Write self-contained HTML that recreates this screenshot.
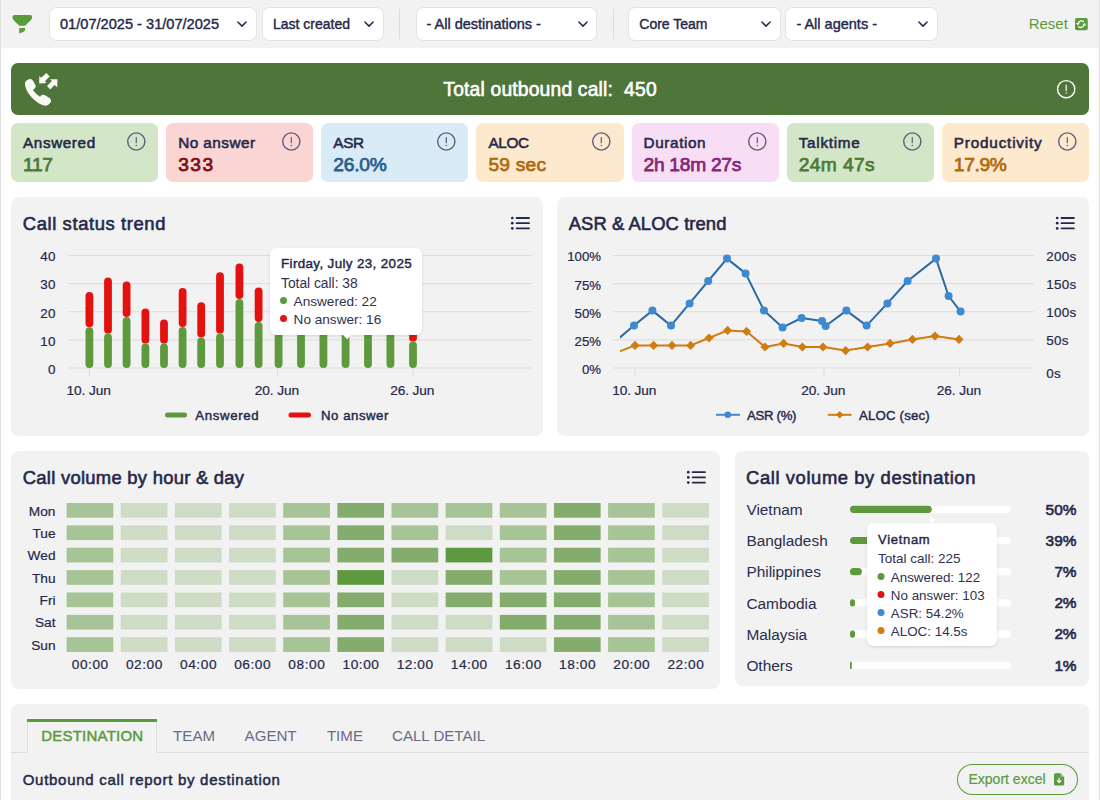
<!DOCTYPE html>
<html><head><meta charset="utf-8"><title>Outbound call dashboard</title>
<style>
html,body{margin:0;padding:0;background:#fff;width:1100px;height:800px;overflow:hidden;}
body{position:relative;font-family:'Liberation Sans', sans-serif;}
.t{position:absolute;white-space:nowrap;line-height:1;}
.b{position:absolute;}
.s{position:absolute;overflow:visible;}
</style></head><body>
<div class="b" style="left:0px;top:0px;width:1100px;height:48px;background:#f2f2f2;border-radius:0px;"></div>
<div class="b" style="left:0px;top:0px;width:1px;height:800px;background:#dedede;border-radius:0px;"></div>
<div class="b" style="left:1099px;top:0px;width:1px;height:800px;background:#dedede;border-radius:0px;"></div>
<svg class="s" style="left:10px;top:12px;" width="26" height="24" viewBox="10 12 26 24"><path d="M14.6 14.9 H30.2 Q32.2 14.9 32.1 17.2 Q32 18.6 31.1 19.7 L25.2 25.8 H19.2 L13.3 19.7 Q12.5 18.6 12.5 17.2 Q12.5 14.9 14.6 14.9 Z" fill="#5c9a3e"/><path d="M19.2 28 H25 V30.2 Q24.6 31.6 22 32.4 L19.2 33.3 Z" fill="#5c9a3e"/></svg>
<div class="b" style="left:49px;top:7.3px;width:207.5px;height:33.8px;background:#ffffff;border-radius:7px;box-shadow:0 0 0 1px #e3e3e3 inset;"></div>
<div class="t" style="left:60px;top:17.39px;font-size:14.6px;font-weight:400;color:#25284a;-webkit-text-stroke:0.4px #25284a;">01/07/2025 - 31/07/2025</div>
<svg class="s" style="left:236.0px;top:18px;" width="12" height="12" viewBox="236.0 18 12 12"><path d="M237.9 22.0 L242.0 26.1 L246.1 22.0" fill="none" stroke="#25284a" stroke-width="1.5" stroke-linecap="round" stroke-linejoin="round"/></svg>
<div class="b" style="left:262px;top:7.3px;width:121.5px;height:33.8px;background:#ffffff;border-radius:7px;box-shadow:0 0 0 1px #e3e3e3 inset;"></div>
<div class="t" style="left:273px;top:17.47px;font-size:14px;font-weight:400;color:#25284a;-webkit-text-stroke:0.4px #25284a;">Last created</div>
<svg class="s" style="left:363.0px;top:18px;" width="12" height="12" viewBox="363.0 18 12 12"><path d="M364.9 22.0 L369.0 26.1 L373.1 22.0" fill="none" stroke="#25284a" stroke-width="1.5" stroke-linecap="round" stroke-linejoin="round"/></svg>
<div class="b" style="left:399px;top:9px;width:1px;height:30px;background:#dcdcdc;border-radius:0px;"></div>
<div class="b" style="left:415.5px;top:7.3px;width:181.5px;height:33.8px;background:#ffffff;border-radius:7px;box-shadow:0 0 0 1px #e3e3e3 inset;"></div>
<div class="t" style="left:426.5px;top:17.41px;font-size:14.5px;font-weight:400;color:#25284a;-webkit-text-stroke:0.4px #25284a;">- All destinations -</div>
<svg class="s" style="left:576.5px;top:18px;" width="12" height="12" viewBox="576.5 18 12 12"><path d="M578.4 22.0 L582.5 26.1 L586.6 22.0" fill="none" stroke="#25284a" stroke-width="1.5" stroke-linecap="round" stroke-linejoin="round"/></svg>
<div class="b" style="left:612.5px;top:9px;width:1px;height:30px;background:#dcdcdc;border-radius:0px;"></div>
<div class="b" style="left:628.3px;top:7.3px;width:152.3px;height:33.8px;background:#ffffff;border-radius:7px;box-shadow:0 0 0 1px #e3e3e3 inset;"></div>
<div class="t" style="left:639.3px;top:17.47px;font-size:14px;font-weight:400;color:#25284a;-webkit-text-stroke:0.4px #25284a;">Core Team</div>
<svg class="s" style="left:760.0999999999999px;top:18px;" width="12" height="12" viewBox="760.0999999999999 18 12 12"><path d="M761.9999999999999 22.0 L766.0999999999999 26.1 L770.1999999999999 22.0" fill="none" stroke="#25284a" stroke-width="1.5" stroke-linecap="round" stroke-linejoin="round"/></svg>
<div class="b" style="left:785.4px;top:7.3px;width:152.2px;height:33.8px;background:#ffffff;border-radius:7px;box-shadow:0 0 0 1px #e3e3e3 inset;"></div>
<div class="t" style="left:796.4px;top:17.41px;font-size:14.5px;font-weight:400;color:#25284a;-webkit-text-stroke:0.4px #25284a;">- All agents -</div>
<svg class="s" style="left:917.0999999999999px;top:18px;" width="12" height="12" viewBox="917.0999999999999 18 12 12"><path d="M918.9999999999999 22.0 L923.0999999999999 26.1 L927.1999999999999 22.0" fill="none" stroke="#25284a" stroke-width="1.5" stroke-linecap="round" stroke-linejoin="round"/></svg>
<div class="t" style="left:1028.7px;top:16.24px;font-size:15px;font-weight:400;color:#5c9a3e;">Reset</div>
<svg class="s" style="left:1074px;top:17px;" width="15" height="15" viewBox="1074 17 15 15"><rect x="1075" y="17.9" width="12.8" height="12.4" rx="2" fill="#5c9a3e"/><path d="M1083.9 21.7 A3.5 3.5 0 0 0 1078.3 23.2" fill="none" stroke="#fff" stroke-width="1.3"/><path d="M1076 22.9 L1079.6 23.0 L1077.8 25.6 Z" fill="#fff"/><path d="M1078.2 26.6 A3.5 3.5 0 0 0 1083.8 25.1" fill="none" stroke="#fff" stroke-width="1.3"/><path d="M1086.2 25.4 L1082.6 25.3 L1084.4 22.7 Z" fill="#fff"/></svg>
<div class="b" style="left:11px;top:63px;width:1078px;height:52.3px;background:#50753a;border-radius:7px;"></div>
<svg class="s" style="left:20px;top:66px;" width="44" height="44" viewBox="20 66 44 44"><path d="M29.9 79.0 Q27.3 79.5 25.7 81.3 Q24.6 82.9 25.0 85.2 Q26.0 90.0 28.6 93.6 Q33.0 100.0 40.0 104.0 Q43.4 105.9 46.4 105.8 Q49.6 104.7 51.0 101.7 Q51.3 99.2 49.5 97.9 L44.6 95.1 Q42.5 94.2 41.1 95.5 L40.0 96.8 Q36.0 94.4 32.9 90.1 L34.7 88.6 Q36.1 87.2 35.6 85.5 L33.2 81.1 Q31.9 78.8 29.9 79.0 Z" fill="#f8f8f5"/><path d="M46.3 73 L49.7 76.4 L44.9 81.2 L46.6 82.9 L39.2 83.5 L39.3 76 L41.1 77.8 Z" fill="#f8f8f5"/><path d="M47 86 L50.3 89.4 L54.6 85.1 L57.3 87.2 L57.3 79.3 L49.9 79.3 L51.9 81.1 Z" fill="#f8f8f5"/></svg>
<div class="t" style="left:250.09000000000003px;width:600px;text-align:center;top:80.48px;font-size:19.3px;font-weight:400;color:#ffffff;letter-spacing:0.177px;-webkit-text-stroke:0.6px #ffffff;">Total outbound call:&nbsp; 450</div>
<svg class="s" style="left:1055px;top:78px;" width="22" height="22" viewBox="1055 78 22 22"><circle cx="1066.2" cy="89.2" r="8.6" fill="none" stroke="#ffffff" stroke-width="1.4"/><line x1="1066.2" y1="85.2" x2="1066.2" y2="90.4" stroke="#ffffff" stroke-width="1.2" stroke-linecap="round"/><circle cx="1066.2" cy="93.10000000000001" r="0.75" fill="#ffffff"/></svg>
<div class="b" style="left:11.0px;top:123px;width:147.14px;height:59px;background:#d3e7c8;border-radius:7px;"></div>
<div class="t" style="left:23.0px;top:134.60px;font-size:15.3px;font-weight:400;color:#25284a;letter-spacing:0.591px;-webkit-text-stroke:0.55px #25284a;">Answered</div>
<div class="t" style="left:23.0px;top:155.39px;font-size:19.2px;font-weight:400;color:#4c7a34;letter-spacing:-0.350px;-webkit-text-stroke:0.75px #4c7a34;">117</div>
<svg class="s" style="left:125.0px;top:131px;" width="22" height="22" viewBox="125.0 131 22 22"><circle cx="136.3" cy="141.5" r="8.6" fill="none" stroke="#5c5c7e" stroke-width="1.4"/><line x1="136.3" y1="137.5" x2="136.3" y2="142.7" stroke="#5c5c7e" stroke-width="1.2" stroke-linecap="round"/><circle cx="136.3" cy="145.4" r="0.75" fill="#5c5c7e"/></svg>
<div class="b" style="left:166.14px;top:123px;width:147.14px;height:59px;background:#fad5d3;border-radius:7px;"></div>
<div class="t" style="left:178.14px;top:134.60px;font-size:15.3px;font-weight:400;color:#25284a;letter-spacing:0.481px;-webkit-text-stroke:0.55px #25284a;">No answer</div>
<div class="t" style="left:178.14px;top:155.39px;font-size:19.2px;font-weight:400;color:#7d0f0f;letter-spacing:1.509px;-webkit-text-stroke:0.75px #7d0f0f;">333</div>
<svg class="s" style="left:280.14px;top:131px;" width="22" height="22" viewBox="280.14 131 22 22"><circle cx="291.44" cy="141.5" r="8.6" fill="none" stroke="#5c5c7e" stroke-width="1.4"/><line x1="291.44" y1="137.5" x2="291.44" y2="142.7" stroke="#5c5c7e" stroke-width="1.2" stroke-linecap="round"/><circle cx="291.44" cy="145.4" r="0.75" fill="#5c5c7e"/></svg>
<div class="b" style="left:321.29px;top:123px;width:147.14px;height:59px;background:#d9ebf6;border-radius:7px;"></div>
<div class="t" style="left:333.29px;top:134.60px;font-size:15.3px;font-weight:400;color:#25284a;letter-spacing:-0.350px;-webkit-text-stroke:0.55px #25284a;">ASR</div>
<div class="t" style="left:333.29px;top:155.39px;font-size:19.2px;font-weight:400;color:#285c8f;letter-spacing:-0.237px;-webkit-text-stroke:0.75px #285c8f;">26.0%</div>
<svg class="s" style="left:435.29px;top:131px;" width="22" height="22" viewBox="435.29 131 22 22"><circle cx="446.59" cy="141.5" r="8.6" fill="none" stroke="#5c5c7e" stroke-width="1.4"/><line x1="446.59" y1="137.5" x2="446.59" y2="142.7" stroke="#5c5c7e" stroke-width="1.2" stroke-linecap="round"/><circle cx="446.59" cy="145.4" r="0.75" fill="#5c5c7e"/></svg>
<div class="b" style="left:476.43px;top:123px;width:147.14px;height:59px;background:#fde9ce;border-radius:7px;"></div>
<div class="t" style="left:488.43px;top:134.60px;font-size:15.3px;font-weight:400;color:#25284a;letter-spacing:-0.350px;-webkit-text-stroke:0.55px #25284a;">ALOC</div>
<div class="t" style="left:488.43px;top:155.39px;font-size:19.2px;font-weight:400;color:#b06a0c;letter-spacing:0.231px;-webkit-text-stroke:0.75px #b06a0c;">59 sec</div>
<svg class="s" style="left:590.43px;top:131px;" width="22" height="22" viewBox="590.43 131 22 22"><circle cx="601.73" cy="141.5" r="8.6" fill="none" stroke="#5c5c7e" stroke-width="1.4"/><line x1="601.73" y1="137.5" x2="601.73" y2="142.7" stroke="#5c5c7e" stroke-width="1.2" stroke-linecap="round"/><circle cx="601.73" cy="145.4" r="0.75" fill="#5c5c7e"/></svg>
<div class="b" style="left:631.57px;top:123px;width:147.14px;height:59px;background:#f8def5;border-radius:7px;"></div>
<div class="t" style="left:643.57px;top:134.60px;font-size:15.3px;font-weight:400;color:#25284a;letter-spacing:0.605px;-webkit-text-stroke:0.55px #25284a;">Duration</div>
<div class="t" style="left:643.57px;top:155.39px;font-size:19.2px;font-weight:400;color:#872577;letter-spacing:-0.288px;-webkit-text-stroke:0.75px #872577;">2h 18m 27s</div>
<svg class="s" style="left:745.57px;top:131px;" width="22" height="22" viewBox="745.57 131 22 22"><circle cx="756.87" cy="141.5" r="8.6" fill="none" stroke="#5c5c7e" stroke-width="1.4"/><line x1="756.87" y1="137.5" x2="756.87" y2="142.7" stroke="#5c5c7e" stroke-width="1.2" stroke-linecap="round"/><circle cx="756.87" cy="145.4" r="0.75" fill="#5c5c7e"/></svg>
<div class="b" style="left:786.71px;top:123px;width:147.14px;height:59px;background:#d3e7c8;border-radius:7px;"></div>
<div class="t" style="left:798.71px;top:134.60px;font-size:15.3px;font-weight:400;color:#25284a;letter-spacing:0.710px;-webkit-text-stroke:0.55px #25284a;">Talktime</div>
<div class="t" style="left:798.71px;top:155.39px;font-size:19.2px;font-weight:400;color:#4c7a34;letter-spacing:0.392px;-webkit-text-stroke:0.75px #4c7a34;">24m 47s</div>
<svg class="s" style="left:900.71px;top:131px;" width="22" height="22" viewBox="900.71 131 22 22"><circle cx="912.01" cy="141.5" r="8.6" fill="none" stroke="#5c5c7e" stroke-width="1.4"/><line x1="912.01" y1="137.5" x2="912.01" y2="142.7" stroke="#5c5c7e" stroke-width="1.2" stroke-linecap="round"/><circle cx="912.01" cy="145.4" r="0.75" fill="#5c5c7e"/></svg>
<div class="b" style="left:941.86px;top:123px;width:147.14px;height:59px;background:#fde9ce;border-radius:7px;"></div>
<div class="t" style="left:953.86px;top:134.60px;font-size:15.3px;font-weight:400;color:#25284a;letter-spacing:0.798px;-webkit-text-stroke:0.55px #25284a;">Productivity</div>
<div class="t" style="left:953.86px;top:155.39px;font-size:19.2px;font-weight:400;color:#b06a0c;letter-spacing:-0.350px;-webkit-text-stroke:0.75px #b06a0c;">17.9%</div>
<svg class="s" style="left:1055.86px;top:131px;" width="22" height="22" viewBox="1055.86 131 22 22"><circle cx="1067.16" cy="141.5" r="8.6" fill="none" stroke="#5c5c7e" stroke-width="1.4"/><line x1="1067.16" y1="137.5" x2="1067.16" y2="142.7" stroke="#5c5c7e" stroke-width="1.2" stroke-linecap="round"/><circle cx="1067.16" cy="145.4" r="0.75" fill="#5c5c7e"/></svg>
<div class="b" style="left:11px;top:197px;width:531.6px;height:238.5px;background:#f2f2f2;border-radius:8px;"></div>
<div class="t" style="left:22.8px;top:214.90px;font-size:18.4px;font-weight:400;color:#25284a;letter-spacing:0.605px;-webkit-text-stroke:0.59px #25284a;">Call status trend</div>
<svg class="s" style="left:508px;top:213px;" width="26" height="20" viewBox="508 213 26 20"><circle cx="512.3" cy="218.0" r="1.35" fill="#25284a"/><line x1="516.5999999999999" y1="218.0" x2="529.0" y2="218.0" stroke="#25284a" stroke-width="1.8" stroke-linecap="round"/><circle cx="512.3" cy="223.2" r="1.35" fill="#25284a"/><line x1="516.5999999999999" y1="223.2" x2="529.0" y2="223.2" stroke="#25284a" stroke-width="1.8" stroke-linecap="round"/><circle cx="512.3" cy="228.4" r="1.35" fill="#25284a"/><line x1="516.5999999999999" y1="228.4" x2="529.0" y2="228.4" stroke="#25284a" stroke-width="1.8" stroke-linecap="round"/></svg>
<svg class="s" style="left:60px;top:240px;" width="480" height="140" viewBox="60 240 480 140"><line x1="68" y1="255.50" x2="532" y2="255.50" stroke="#dcdcdc" stroke-width="1"/><line x1="68" y1="283.62" x2="532" y2="283.62" stroke="#dcdcdc" stroke-width="1"/><line x1="68" y1="311.75" x2="532" y2="311.75" stroke="#dcdcdc" stroke-width="1"/><line x1="68" y1="339.88" x2="532" y2="339.88" stroke="#dcdcdc" stroke-width="1"/><line x1="68" y1="368.00" x2="532" y2="368.00" stroke="#dcdcdc" stroke-width="1"/><line x1="89.4" y1="368" x2="89.4" y2="376" stroke="#dcdcdc" stroke-width="1"/><line x1="277.6" y1="368" x2="277.6" y2="376" stroke="#dcdcdc" stroke-width="1"/><line x1="413" y1="368" x2="413" y2="376" stroke="#dcdcdc" stroke-width="1"/><rect x="85.50" y="292.00" width="7.8" height="35.20" rx="3.9" fill="#e3120f"/><rect x="85.50" y="327.20" width="7.8" height="40.80" rx="3.9" fill="#5e993e"/><rect x="104.10" y="277.60" width="7.8" height="56.00" rx="3.9" fill="#e3120f"/><rect x="104.10" y="333.60" width="7.8" height="34.40" rx="3.9" fill="#5e993e"/><rect x="122.70" y="281.60" width="7.8" height="35.40" rx="3.9" fill="#e3120f"/><rect x="122.70" y="317.00" width="7.8" height="51.00" rx="3.9" fill="#5e993e"/><rect x="141.50" y="308.60" width="7.8" height="35.00" rx="3.9" fill="#e3120f"/><rect x="141.50" y="343.60" width="7.8" height="24.40" rx="3.9" fill="#5e993e"/><rect x="160.10" y="319.60" width="7.8" height="24.00" rx="3.9" fill="#e3120f"/><rect x="160.10" y="343.60" width="7.8" height="24.40" rx="3.9" fill="#5e993e"/><rect x="178.70" y="288.00" width="7.8" height="39.00" rx="3.9" fill="#e3120f"/><rect x="178.70" y="327.00" width="7.8" height="41.00" rx="3.9" fill="#5e993e"/><rect x="197.30" y="302.20" width="7.8" height="35.20" rx="3.9" fill="#e3120f"/><rect x="197.30" y="337.40" width="7.8" height="30.60" rx="3.9" fill="#5e993e"/><rect x="216.10" y="272.20" width="7.8" height="61.40" rx="3.9" fill="#e3120f"/><rect x="216.10" y="333.60" width="7.8" height="34.40" rx="3.9" fill="#5e993e"/><rect x="235.50" y="263.60" width="7.8" height="35.40" rx="3.9" fill="#e3120f"/><rect x="235.50" y="299.00" width="7.8" height="69.00" rx="3.9" fill="#5e993e"/><rect x="254.70" y="287.40" width="7.8" height="34.60" rx="3.9" fill="#e3120f"/><rect x="254.70" y="322.00" width="7.8" height="46.00" rx="3.9" fill="#5e993e"/><rect x="274.70" y="322.00" width="7.8" height="10.00" rx="3.9" fill="#e3120f"/><rect x="274.70" y="332.00" width="7.8" height="36.00" rx="3.9" fill="#5e993e"/><rect x="297.10" y="322.00" width="7.8" height="10.00" rx="3.9" fill="#e3120f"/><rect x="297.10" y="332.00" width="7.8" height="36.00" rx="3.9" fill="#5e993e"/><rect x="319.50" y="322.00" width="7.8" height="10.00" rx="3.9" fill="#e3120f"/><rect x="319.50" y="332.00" width="7.8" height="36.00" rx="3.9" fill="#5e993e"/><rect x="341.70" y="322.00" width="7.8" height="10.00" rx="3.9" fill="#e3120f"/><rect x="341.70" y="332.00" width="7.8" height="36.00" rx="3.9" fill="#5e993e"/><rect x="364.10" y="322.00" width="7.8" height="10.00" rx="3.9" fill="#e3120f"/><rect x="364.10" y="332.00" width="7.8" height="36.00" rx="3.9" fill="#5e993e"/><rect x="386.50" y="322.00" width="7.8" height="10.00" rx="3.9" fill="#e3120f"/><rect x="386.50" y="332.00" width="7.8" height="36.00" rx="3.9" fill="#5e993e"/><rect x="409.10" y="328.00" width="7.8" height="13.60" rx="3.9" fill="#e3120f"/><rect x="409.10" y="341.60" width="7.8" height="26.40" rx="3.9" fill="#5e993e"/></svg>
<div class="t" style="right:1044.4px;top:250.35px;font-size:13.4px;font-weight:400;color:#25284a;-webkit-text-stroke:0.2px #25284a;letter-spacing:0.25px;">40</div>
<div class="t" style="right:1044.4px;top:278.48px;font-size:13.4px;font-weight:400;color:#25284a;-webkit-text-stroke:0.2px #25284a;letter-spacing:0.25px;">30</div>
<div class="t" style="right:1044.4px;top:306.60px;font-size:13.4px;font-weight:400;color:#25284a;-webkit-text-stroke:0.2px #25284a;letter-spacing:0.25px;">20</div>
<div class="t" style="right:1044.4px;top:334.73px;font-size:13.4px;font-weight:400;color:#25284a;-webkit-text-stroke:0.2px #25284a;letter-spacing:0.25px;">10</div>
<div class="t" style="right:1044.4px;top:362.85px;font-size:13.4px;font-weight:400;color:#25284a;-webkit-text-stroke:0.2px #25284a;letter-spacing:0.25px;">0</div>
<div class="t" style="left:-211.3px;width:600px;text-align:center;top:384.01px;font-size:13.7px;font-weight:400;color:#25284a;-webkit-text-stroke:0.2px #25284a;letter-spacing:-0.1px;">10. Jun</div>
<div class="t" style="left:-23.099999999999966px;width:600px;text-align:center;top:384.01px;font-size:13.7px;font-weight:400;color:#25284a;-webkit-text-stroke:0.2px #25284a;letter-spacing:-0.1px;">20. Jun</div>
<div class="t" style="left:112.30000000000001px;width:600px;text-align:center;top:384.01px;font-size:13.7px;font-weight:400;color:#25284a;-webkit-text-stroke:0.2px #25284a;letter-spacing:-0.1px;">26. Jun</div>
<svg class="s" style="left:160px;top:405px;" width="160" height="20" viewBox="160 405 160 20"><line x1="167.5" y1="415" x2="184.5" y2="415" stroke="#5e993e" stroke-width="5" stroke-linecap="round"/><line x1="291" y1="415" x2="308.5" y2="415" stroke="#e3120f" stroke-width="5" stroke-linecap="round"/></svg>
<div class="t" style="left:195.3px;top:408.58px;font-size:13.2px;font-weight:400;color:#25284a;letter-spacing:0.666px;-webkit-text-stroke:0.42px #25284a;">Answered</div>
<div class="t" style="left:321px;top:408.58px;font-size:13.2px;font-weight:400;color:#25284a;letter-spacing:0.538px;-webkit-text-stroke:0.42px #25284a;">No answer</div>
<div class="b" style="left:269.6px;top:247.6px;width:152.4px;height:87.1px;background:#ffffff;border-radius:6px;box-shadow:0 1px 3px rgba(0,0,0,0.12);"></div>
<svg class="s" style="left:340px;top:330px;" width="16" height="12" viewBox="340 330 16 12"><path d="M342.3 334.2 L347.2 339.2 L352.1 334.2 Z" fill="#fff"/></svg>
<div class="t" style="left:281px;top:257.25px;font-size:13.4px;font-weight:400;color:#25284a;letter-spacing:0.368px;-webkit-text-stroke:0.43px #25284a;">Firday, July 23, 2025</div>
<div class="t" style="left:281px;top:276.80px;font-size:13.8px;font-weight:400;color:#2e3150;">Total call: 38</div>
<svg class="s" style="left:278px;top:296px;" width="12" height="30" viewBox="278 296 12 30"><circle cx="283.5" cy="300.6" r="3.5" fill="#5e993e"/><circle cx="283.5" cy="318.5" r="3.5" fill="#e3120f"/></svg>
<div class="t" style="left:293.6px;top:294.83px;font-size:13.6px;font-weight:400;color:#2e3150;">Answered: 22</div>
<div class="t" style="left:293.6px;top:313.03px;font-size:13.6px;font-weight:400;color:#2e3150;">No answer: 16</div>
<div class="b" style="left:557px;top:197px;width:532px;height:238.5px;background:#f2f2f2;border-radius:8px;"></div>
<div class="t" style="left:568.7px;top:214.90px;font-size:18.4px;font-weight:400;color:#25284a;letter-spacing:0.088px;-webkit-text-stroke:0.59px #25284a;">ASR &amp; ALOC trend</div>
<svg class="s" style="left:1053px;top:213px;" width="26" height="20" viewBox="1053 213 26 20"><circle cx="1057.2" cy="218.0" r="1.35" fill="#25284a"/><line x1="1061.5" y1="218.0" x2="1073.9" y2="218.0" stroke="#25284a" stroke-width="1.8" stroke-linecap="round"/><circle cx="1057.2" cy="223.2" r="1.35" fill="#25284a"/><line x1="1061.5" y1="223.2" x2="1073.9" y2="223.2" stroke="#25284a" stroke-width="1.8" stroke-linecap="round"/><circle cx="1057.2" cy="228.4" r="1.35" fill="#25284a"/><line x1="1061.5" y1="228.4" x2="1073.9" y2="228.4" stroke="#25284a" stroke-width="1.8" stroke-linecap="round"/></svg>
<svg class="s" style="left:605px;top:240px;" width="440" height="140" viewBox="605 240 440 140"><line x1="613" y1="255.50" x2="1034" y2="255.50" stroke="#dcdcdc" stroke-width="1"/><line x1="613" y1="283.62" x2="1034" y2="283.62" stroke="#dcdcdc" stroke-width="1"/><line x1="613" y1="311.75" x2="1034" y2="311.75" stroke="#dcdcdc" stroke-width="1"/><line x1="613" y1="339.88" x2="1034" y2="339.88" stroke="#dcdcdc" stroke-width="1"/><line x1="613" y1="368.00" x2="1034" y2="368.00" stroke="#dcdcdc" stroke-width="1"/><line x1="635" y1="368" x2="635" y2="376" stroke="#dcdcdc" stroke-width="1"/><line x1="824" y1="368" x2="824" y2="376" stroke="#dcdcdc" stroke-width="1"/><line x1="959.6" y1="368" x2="959.6" y2="376" stroke="#dcdcdc" stroke-width="1"/><defs><clipPath id="pc"><rect x="620" y="240" width="420" height="140"/></clipPath></defs><polyline clip-path="url(#pc)" points="615.5,341.2 634,325.6 652.4,310.6 671,325.6 689.6,303.4 708.2,281 727,258.6 745.6,273.4 764,310.6 782.6,327.4 801.6,318 822,321 825.6,326 846.4,310.6 866.6,325.6 887.4,303.4 907.6,281 936,258.6 948.6,296 960.6,311.6" fill="none" stroke="#2b6aa3" stroke-width="2" stroke-linejoin="round"/><polyline clip-path="url(#pc)" points="615.5,353 635,345.4 653.6,345.4 672,345.4 690.6,345.4 709,338 727.6,330.4 746.6,331.4 765,347 783.6,343.4 802.4,347 823,347 845.6,350.6 867.6,347 890,343.4 912.4,339.4 935,336 959,339.4" fill="none" stroke="#d07c10" stroke-width="2" stroke-linejoin="round"/><circle cx="634" cy="325.6" r="4" fill="#3e8ad0"/><circle cx="652.4" cy="310.6" r="4" fill="#3e8ad0"/><circle cx="671" cy="325.6" r="4" fill="#3e8ad0"/><circle cx="689.6" cy="303.4" r="4" fill="#3e8ad0"/><circle cx="708.2" cy="281" r="4" fill="#3e8ad0"/><circle cx="727" cy="258.6" r="4" fill="#3e8ad0"/><circle cx="745.6" cy="273.4" r="4" fill="#3e8ad0"/><circle cx="764" cy="310.6" r="4" fill="#3e8ad0"/><circle cx="782.6" cy="327.4" r="4" fill="#3e8ad0"/><circle cx="801.6" cy="318" r="4" fill="#3e8ad0"/><circle cx="822" cy="321" r="4" fill="#3e8ad0"/><circle cx="825.6" cy="326" r="4" fill="#3e8ad0"/><circle cx="846.4" cy="310.6" r="4" fill="#3e8ad0"/><circle cx="866.6" cy="325.6" r="4" fill="#3e8ad0"/><circle cx="887.4" cy="303.4" r="4" fill="#3e8ad0"/><circle cx="907.6" cy="281" r="4" fill="#3e8ad0"/><circle cx="936" cy="258.6" r="4" fill="#3e8ad0"/><circle cx="948.6" cy="296" r="4" fill="#3e8ad0"/><circle cx="960.6" cy="311.6" r="4" fill="#3e8ad0"/><path d="M635 340.79999999999995 L639.6 345.4 L635 350.0 L630.4 345.4 Z" fill="#d07c10"/><path d="M653.6 340.79999999999995 L658.2 345.4 L653.6 350.0 L649.0 345.4 Z" fill="#d07c10"/><path d="M672 340.79999999999995 L676.6 345.4 L672 350.0 L667.4 345.4 Z" fill="#d07c10"/><path d="M690.6 340.79999999999995 L695.2 345.4 L690.6 350.0 L686.0 345.4 Z" fill="#d07c10"/><path d="M709 333.4 L713.6 338 L709 342.6 L704.4 338 Z" fill="#d07c10"/><path d="M727.6 325.79999999999995 L732.2 330.4 L727.6 335.0 L723.0 330.4 Z" fill="#d07c10"/><path d="M746.6 326.79999999999995 L751.2 331.4 L746.6 336.0 L742.0 331.4 Z" fill="#d07c10"/><path d="M765 342.4 L769.6 347 L765 351.6 L760.4 347 Z" fill="#d07c10"/><path d="M783.6 338.79999999999995 L788.2 343.4 L783.6 348.0 L779.0 343.4 Z" fill="#d07c10"/><path d="M802.4 342.4 L807.0 347 L802.4 351.6 L797.8 347 Z" fill="#d07c10"/><path d="M823 342.4 L827.6 347 L823 351.6 L818.4 347 Z" fill="#d07c10"/><path d="M845.6 346.0 L850.2 350.6 L845.6 355.20000000000005 L841.0 350.6 Z" fill="#d07c10"/><path d="M867.6 342.4 L872.2 347 L867.6 351.6 L863.0 347 Z" fill="#d07c10"/><path d="M890 338.79999999999995 L894.6 343.4 L890 348.0 L885.4 343.4 Z" fill="#d07c10"/><path d="M912.4 334.79999999999995 L917.0 339.4 L912.4 344.0 L907.8 339.4 Z" fill="#d07c10"/><path d="M935 331.4 L939.6 336 L935 340.6 L930.4 336 Z" fill="#d07c10"/><path d="M959 334.79999999999995 L963.6 339.4 L959 344.0 L954.4 339.4 Z" fill="#d07c10"/></svg>
<div class="t" style="right:499px;top:250.38px;font-size:13.2px;font-weight:400;color:#25284a;-webkit-text-stroke:0.2px #25284a;">100%</div>
<div class="t" style="right:499px;top:278.50px;font-size:13.2px;font-weight:400;color:#25284a;-webkit-text-stroke:0.2px #25284a;">75%</div>
<div class="t" style="right:499px;top:306.63px;font-size:13.2px;font-weight:400;color:#25284a;-webkit-text-stroke:0.2px #25284a;">50%</div>
<div class="t" style="right:499px;top:334.75px;font-size:13.2px;font-weight:400;color:#25284a;-webkit-text-stroke:0.2px #25284a;">25%</div>
<div class="t" style="right:499px;top:362.88px;font-size:13.2px;font-weight:400;color:#25284a;-webkit-text-stroke:0.2px #25284a;">0%</div>
<div class="t" style="left:1046.3px;top:249.85px;font-size:13.4px;font-weight:400;color:#25284a;-webkit-text-stroke:0.2px #25284a;letter-spacing:0.3px;">200s</div>
<div class="t" style="left:1046.3px;top:278.25px;font-size:13.4px;font-weight:400;color:#25284a;-webkit-text-stroke:0.2px #25284a;letter-spacing:0.3px;">150s</div>
<div class="t" style="left:1046.3px;top:306.15px;font-size:13.4px;font-weight:400;color:#25284a;-webkit-text-stroke:0.2px #25284a;letter-spacing:0.3px;">100s</div>
<div class="t" style="left:1046.3px;top:333.75px;font-size:13.4px;font-weight:400;color:#25284a;-webkit-text-stroke:0.2px #25284a;letter-spacing:0.3px;">50s</div>
<div class="t" style="left:1046.3px;top:367.35px;font-size:13.4px;font-weight:400;color:#25284a;-webkit-text-stroke:0.2px #25284a;letter-spacing:0.3px;">0s</div>
<div class="t" style="left:334.29999999999995px;width:600px;text-align:center;top:384.01px;font-size:13.7px;font-weight:400;color:#25284a;-webkit-text-stroke:0.2px #25284a;letter-spacing:-0.1px;">10. Jun</div>
<div class="t" style="left:523.3px;width:600px;text-align:center;top:384.01px;font-size:13.7px;font-weight:400;color:#25284a;-webkit-text-stroke:0.2px #25284a;letter-spacing:-0.1px;">20. Jun</div>
<div class="t" style="left:658.9px;width:600px;text-align:center;top:384.01px;font-size:13.7px;font-weight:400;color:#25284a;-webkit-text-stroke:0.2px #25284a;letter-spacing:-0.1px;">26. Jun</div>
<svg class="s" style="left:710px;top:405px;" width="150" height="20" viewBox="710 405 150 20"><line x1="716" y1="414.8" x2="740" y2="414.8" stroke="#3e8ad0" stroke-width="2"/><circle cx="727.8" cy="414.8" r="3.3" fill="#3e8ad0"/><line x1="827.8" y1="414.8" x2="851.6" y2="414.8" stroke="#d07c10" stroke-width="2"/><path d="M839.7 411 L843.5 414.8 L839.7 418.6 L835.9 414.8 Z" fill="#d07c10"/></svg>
<div class="t" style="left:747px;top:408.58px;font-size:13.2px;font-weight:400;color:#25284a;letter-spacing:-0.302px;-webkit-text-stroke:0.42px #25284a;">ASR (%)</div>
<div class="t" style="left:859px;top:408.58px;font-size:13.2px;font-weight:400;color:#25284a;letter-spacing:0.208px;-webkit-text-stroke:0.42px #25284a;">ALOC (sec)</div>
<div class="b" style="left:11px;top:451px;width:708.5px;height:238px;background:#f2f2f2;border-radius:8px;"></div>
<div class="t" style="left:22.8px;top:468.70px;font-size:18.4px;font-weight:400;color:#25284a;letter-spacing:0.275px;-webkit-text-stroke:0.59px #25284a;">Call volume by hour &amp; day</div>
<svg class="s" style="left:684px;top:467px;" width="26" height="20" viewBox="684 467 26 20"><circle cx="688.3" cy="472.2" r="1.35" fill="#25284a"/><line x1="692.5999999999999" y1="472.2" x2="705.0" y2="472.2" stroke="#25284a" stroke-width="1.8" stroke-linecap="round"/><circle cx="688.3" cy="477.4" r="1.35" fill="#25284a"/><line x1="692.5999999999999" y1="477.4" x2="705.0" y2="477.4" stroke="#25284a" stroke-width="1.8" stroke-linecap="round"/><circle cx="688.3" cy="482.59999999999997" r="1.35" fill="#25284a"/><line x1="692.5999999999999" y1="482.59999999999997" x2="705.0" y2="482.59999999999997" stroke="#25284a" stroke-width="1.8" stroke-linecap="round"/></svg>
<svg class="s" style="left:60px;top:495px;" width="660" height="165" viewBox="60 495 660 165"><rect x="66.60" y="503.00" width="46.7" height="14.7" fill="#a6c496"/><rect x="120.75" y="503.00" width="46.7" height="14.7" fill="#cedbc5"/><rect x="174.90" y="503.00" width="46.7" height="14.7" fill="#cedbc5"/><rect x="229.05" y="503.00" width="46.7" height="14.7" fill="#cedbc5"/><rect x="283.20" y="503.00" width="46.7" height="14.7" fill="#a6c496"/><rect x="337.35" y="503.00" width="46.7" height="14.7" fill="#84ad6d"/><rect x="391.50" y="503.00" width="46.7" height="14.7" fill="#a6c496"/><rect x="445.65" y="503.00" width="46.7" height="14.7" fill="#a6c496"/><rect x="499.80" y="503.00" width="46.7" height="14.7" fill="#a6c496"/><rect x="553.95" y="503.00" width="46.7" height="14.7" fill="#84ad6d"/><rect x="608.10" y="503.00" width="46.7" height="14.7" fill="#a6c496"/><rect x="662.25" y="503.00" width="46.7" height="14.7" fill="#cedbc5"/><rect x="66.60" y="525.37" width="46.7" height="14.7" fill="#a6c496"/><rect x="120.75" y="525.37" width="46.7" height="14.7" fill="#cedbc5"/><rect x="174.90" y="525.37" width="46.7" height="14.7" fill="#cedbc5"/><rect x="229.05" y="525.37" width="46.7" height="14.7" fill="#cedbc5"/><rect x="283.20" y="525.37" width="46.7" height="14.7" fill="#a6c496"/><rect x="337.35" y="525.37" width="46.7" height="14.7" fill="#84ad6d"/><rect x="391.50" y="525.37" width="46.7" height="14.7" fill="#a6c496"/><rect x="445.65" y="525.37" width="46.7" height="14.7" fill="#cedbc5"/><rect x="499.80" y="525.37" width="46.7" height="14.7" fill="#a6c496"/><rect x="553.95" y="525.37" width="46.7" height="14.7" fill="#84ad6d"/><rect x="608.10" y="525.37" width="46.7" height="14.7" fill="#a6c496"/><rect x="662.25" y="525.37" width="46.7" height="14.7" fill="#cedbc5"/><rect x="66.60" y="547.74" width="46.7" height="14.7" fill="#a6c496"/><rect x="120.75" y="547.74" width="46.7" height="14.7" fill="#cedbc5"/><rect x="174.90" y="547.74" width="46.7" height="14.7" fill="#cedbc5"/><rect x="229.05" y="547.74" width="46.7" height="14.7" fill="#cedbc5"/><rect x="283.20" y="547.74" width="46.7" height="14.7" fill="#a6c496"/><rect x="337.35" y="547.74" width="46.7" height="14.7" fill="#84ad6d"/><rect x="391.50" y="547.74" width="46.7" height="14.7" fill="#84ad6d"/><rect x="445.65" y="547.74" width="46.7" height="14.7" fill="#5e993f"/><rect x="499.80" y="547.74" width="46.7" height="14.7" fill="#a6c496"/><rect x="553.95" y="547.74" width="46.7" height="14.7" fill="#84ad6d"/><rect x="608.10" y="547.74" width="46.7" height="14.7" fill="#a6c496"/><rect x="662.25" y="547.74" width="46.7" height="14.7" fill="#cedbc5"/><rect x="66.60" y="570.11" width="46.7" height="14.7" fill="#a6c496"/><rect x="120.75" y="570.11" width="46.7" height="14.7" fill="#cedbc5"/><rect x="174.90" y="570.11" width="46.7" height="14.7" fill="#cedbc5"/><rect x="229.05" y="570.11" width="46.7" height="14.7" fill="#cedbc5"/><rect x="283.20" y="570.11" width="46.7" height="14.7" fill="#a6c496"/><rect x="337.35" y="570.11" width="46.7" height="14.7" fill="#5e993f"/><rect x="391.50" y="570.11" width="46.7" height="14.7" fill="#cedbc5"/><rect x="445.65" y="570.11" width="46.7" height="14.7" fill="#84ad6d"/><rect x="499.80" y="570.11" width="46.7" height="14.7" fill="#a6c496"/><rect x="553.95" y="570.11" width="46.7" height="14.7" fill="#84ad6d"/><rect x="608.10" y="570.11" width="46.7" height="14.7" fill="#a6c496"/><rect x="662.25" y="570.11" width="46.7" height="14.7" fill="#cedbc5"/><rect x="66.60" y="592.48" width="46.7" height="14.7" fill="#a6c496"/><rect x="120.75" y="592.48" width="46.7" height="14.7" fill="#cedbc5"/><rect x="174.90" y="592.48" width="46.7" height="14.7" fill="#cedbc5"/><rect x="229.05" y="592.48" width="46.7" height="14.7" fill="#cedbc5"/><rect x="283.20" y="592.48" width="46.7" height="14.7" fill="#a6c496"/><rect x="337.35" y="592.48" width="46.7" height="14.7" fill="#84ad6d"/><rect x="391.50" y="592.48" width="46.7" height="14.7" fill="#cedbc5"/><rect x="445.65" y="592.48" width="46.7" height="14.7" fill="#84ad6d"/><rect x="499.80" y="592.48" width="46.7" height="14.7" fill="#84ad6d"/><rect x="553.95" y="592.48" width="46.7" height="14.7" fill="#84ad6d"/><rect x="608.10" y="592.48" width="46.7" height="14.7" fill="#a6c496"/><rect x="662.25" y="592.48" width="46.7" height="14.7" fill="#cedbc5"/><rect x="66.60" y="614.85" width="46.7" height="14.7" fill="#a6c496"/><rect x="120.75" y="614.85" width="46.7" height="14.7" fill="#cedbc5"/><rect x="174.90" y="614.85" width="46.7" height="14.7" fill="#cedbc5"/><rect x="229.05" y="614.85" width="46.7" height="14.7" fill="#cedbc5"/><rect x="283.20" y="614.85" width="46.7" height="14.7" fill="#a6c496"/><rect x="337.35" y="614.85" width="46.7" height="14.7" fill="#84ad6d"/><rect x="391.50" y="614.85" width="46.7" height="14.7" fill="#cedbc5"/><rect x="445.65" y="614.85" width="46.7" height="14.7" fill="#cedbc5"/><rect x="499.80" y="614.85" width="46.7" height="14.7" fill="#84ad6d"/><rect x="553.95" y="614.85" width="46.7" height="14.7" fill="#84ad6d"/><rect x="608.10" y="614.85" width="46.7" height="14.7" fill="#a6c496"/><rect x="662.25" y="614.85" width="46.7" height="14.7" fill="#cedbc5"/><rect x="66.60" y="637.22" width="46.7" height="14.7" fill="#a6c496"/><rect x="120.75" y="637.22" width="46.7" height="14.7" fill="#cedbc5"/><rect x="174.90" y="637.22" width="46.7" height="14.7" fill="#cedbc5"/><rect x="229.05" y="637.22" width="46.7" height="14.7" fill="#cedbc5"/><rect x="283.20" y="637.22" width="46.7" height="14.7" fill="#a6c496"/><rect x="337.35" y="637.22" width="46.7" height="14.7" fill="#84ad6d"/><rect x="391.50" y="637.22" width="46.7" height="14.7" fill="#cedbc5"/><rect x="445.65" y="637.22" width="46.7" height="14.7" fill="#cedbc5"/><rect x="499.80" y="637.22" width="46.7" height="14.7" fill="#cedbc5"/><rect x="553.95" y="637.22" width="46.7" height="14.7" fill="#84ad6d"/><rect x="608.10" y="637.22" width="46.7" height="14.7" fill="#a6c496"/><rect x="662.25" y="637.22" width="46.7" height="14.7" fill="#cedbc5"/></svg>
<div class="t" style="right:1044.5px;top:504.61px;font-size:13.7px;font-weight:400;color:#25284a;-webkit-text-stroke:0.2px #25284a;">Mon</div>
<div class="t" style="right:1044.5px;top:526.98px;font-size:13.7px;font-weight:400;color:#25284a;-webkit-text-stroke:0.2px #25284a;">Tue</div>
<div class="t" style="right:1044.5px;top:549.35px;font-size:13.7px;font-weight:400;color:#25284a;-webkit-text-stroke:0.2px #25284a;">Wed</div>
<div class="t" style="right:1044.5px;top:571.72px;font-size:13.7px;font-weight:400;color:#25284a;-webkit-text-stroke:0.2px #25284a;">Thu</div>
<div class="t" style="right:1044.5px;top:594.09px;font-size:13.7px;font-weight:400;color:#25284a;-webkit-text-stroke:0.2px #25284a;">Fri</div>
<div class="t" style="right:1044.5px;top:616.46px;font-size:13.7px;font-weight:400;color:#25284a;-webkit-text-stroke:0.2px #25284a;">Sat</div>
<div class="t" style="right:1044.5px;top:638.83px;font-size:13.7px;font-weight:400;color:#25284a;-webkit-text-stroke:0.2px #25284a;">Sun</div>
<div class="t" style="left:-209.75px;width:600px;text-align:center;top:658.01px;font-size:13.7px;font-weight:400;color:#25284a;-webkit-text-stroke:0.2px #25284a;letter-spacing:0.55px;">00:00</div>
<div class="t" style="left:-155.6px;width:600px;text-align:center;top:658.01px;font-size:13.7px;font-weight:400;color:#25284a;-webkit-text-stroke:0.2px #25284a;letter-spacing:0.55px;">02:00</div>
<div class="t" style="left:-101.45000000000002px;width:600px;text-align:center;top:658.01px;font-size:13.7px;font-weight:400;color:#25284a;-webkit-text-stroke:0.2px #25284a;letter-spacing:0.55px;">04:00</div>
<div class="t" style="left:-47.30000000000001px;width:600px;text-align:center;top:658.01px;font-size:13.7px;font-weight:400;color:#25284a;-webkit-text-stroke:0.2px #25284a;letter-spacing:0.55px;">06:00</div>
<div class="t" style="left:6.850000000000023px;width:600px;text-align:center;top:658.01px;font-size:13.7px;font-weight:400;color:#25284a;-webkit-text-stroke:0.2px #25284a;letter-spacing:0.55px;">08:00</div>
<div class="t" style="left:61.00000000000006px;width:600px;text-align:center;top:658.01px;font-size:13.7px;font-weight:400;color:#25284a;-webkit-text-stroke:0.2px #25284a;letter-spacing:0.55px;">10:00</div>
<div class="t" style="left:115.15000000000003px;width:600px;text-align:center;top:658.01px;font-size:13.7px;font-weight:400;color:#25284a;-webkit-text-stroke:0.2px #25284a;letter-spacing:0.55px;">12:00</div>
<div class="t" style="left:169.3px;width:600px;text-align:center;top:658.01px;font-size:13.7px;font-weight:400;color:#25284a;-webkit-text-stroke:0.2px #25284a;letter-spacing:0.55px;">14:00</div>
<div class="t" style="left:223.44999999999993px;width:600px;text-align:center;top:658.01px;font-size:13.7px;font-weight:400;color:#25284a;-webkit-text-stroke:0.2px #25284a;letter-spacing:0.55px;">16:00</div>
<div class="t" style="left:277.5999999999999px;width:600px;text-align:center;top:658.01px;font-size:13.7px;font-weight:400;color:#25284a;-webkit-text-stroke:0.2px #25284a;letter-spacing:0.55px;">18:00</div>
<div class="t" style="left:331.75px;width:600px;text-align:center;top:658.01px;font-size:13.7px;font-weight:400;color:#25284a;-webkit-text-stroke:0.2px #25284a;letter-spacing:0.55px;">20:00</div>
<div class="t" style="left:385.9px;width:600px;text-align:center;top:658.01px;font-size:13.7px;font-weight:400;color:#25284a;-webkit-text-stroke:0.2px #25284a;letter-spacing:0.55px;">22:00</div>
<div class="b" style="left:735px;top:451px;width:354px;height:235px;background:#f2f2f2;border-radius:8px;"></div>
<div class="t" style="left:746.1px;top:468.70px;font-size:18.4px;font-weight:400;color:#25284a;letter-spacing:0.584px;-webkit-text-stroke:0.59px #25284a;">Call volume by destination</div>
<svg class="s" style="left:840px;top:495px;" width="180" height="180" viewBox="840 495 180 180"><rect x="850" y="505.70" width="161" height="7.2" rx="3.6" fill="#ffffff"/><rect x="850" y="505.70" width="81.8" height="7.2" rx="3.6" fill="#5e993e"/><rect x="850" y="536.90" width="161" height="7.2" rx="3.6" fill="#ffffff"/><rect x="850" y="536.90" width="62.7" height="7.2" rx="3.6" fill="#5e993e"/><rect x="850" y="568.10" width="161" height="7.2" rx="3.6" fill="#ffffff"/><rect x="850" y="568.10" width="11.9" height="7.2" rx="3.6" fill="#5e993e"/><rect x="850" y="599.30" width="161" height="7.2" rx="3.6" fill="#ffffff"/><rect x="850" y="599.30" width="5" height="7.2" rx="2.5" fill="#5e993e"/><rect x="850" y="630.50" width="161" height="7.2" rx="3.6" fill="#ffffff"/><rect x="850" y="630.50" width="5" height="7.2" rx="2.5" fill="#5e993e"/><rect x="850" y="661.70" width="161" height="7.2" rx="3.6" fill="#ffffff"/><rect x="850" y="661.70" width="1.8" height="7.2" rx="0.9" fill="#5e993e"/></svg>
<div class="t" style="left:746.4px;top:502.09px;font-size:15.4px;font-weight:400;color:#2a2d4d;">Vietnam</div>
<div class="t" style="right:23.36999999999989px;top:501.69px;font-size:15.4px;font-weight:400;color:#25284a;letter-spacing:0.127px;-webkit-text-stroke:0.6px #25284a;">50%</div>
<div class="t" style="left:746.4px;top:533.29px;font-size:15.4px;font-weight:400;color:#2a2d4d;">Bangladesh</div>
<div class="t" style="right:23.36999999999989px;top:532.89px;font-size:15.4px;font-weight:400;color:#25284a;letter-spacing:0.127px;-webkit-text-stroke:0.6px #25284a;">39%</div>
<div class="t" style="left:746.4px;top:564.49px;font-size:15.4px;font-weight:400;color:#2a2d4d;">Philippines</div>
<div class="t" style="right:23.84999999999991px;top:564.09px;font-size:15.4px;font-weight:400;color:#25284a;letter-spacing:-0.350px;-webkit-text-stroke:0.6px #25284a;">7%</div>
<div class="t" style="left:746.4px;top:595.69px;font-size:15.4px;font-weight:400;color:#2a2d4d;">Cambodia</div>
<div class="t" style="right:23.84999999999991px;top:595.29px;font-size:15.4px;font-weight:400;color:#25284a;letter-spacing:-0.350px;-webkit-text-stroke:0.6px #25284a;">2%</div>
<div class="t" style="left:746.4px;top:626.89px;font-size:15.4px;font-weight:400;color:#2a2d4d;">Malaysia</div>
<div class="t" style="right:23.84999999999991px;top:626.49px;font-size:15.4px;font-weight:400;color:#25284a;letter-spacing:-0.350px;-webkit-text-stroke:0.6px #25284a;">2%</div>
<div class="t" style="left:746.4px;top:658.09px;font-size:15.4px;font-weight:400;color:#2a2d4d;">Others</div>
<div class="t" style="right:23.84999999999991px;top:657.69px;font-size:15.4px;font-weight:400;color:#25284a;letter-spacing:-0.350px;-webkit-text-stroke:0.6px #25284a;">1%</div>
<div class="b" style="left:867.2px;top:523.0px;width:129.5px;height:123.0px;background:#ffffff;border-radius:6px;box-shadow:0 1px 3px rgba(0,0,0,0.14);"></div>
<svg class="s" style="left:925px;top:510px;" width="14" height="14" viewBox="925 510 14 14"><path d="M931.8 515.8 L935.8 519.8 L931.8 523.8 L927.8 519.8 Z" fill="#fff" stroke="#e6e6e6" stroke-width="0.8"/></svg>
<div class="t" style="left:878px;top:532.90px;font-size:13px;font-weight:400;color:#25284a;letter-spacing:0.696px;-webkit-text-stroke:0.42px #25284a;">Vietnam</div>
<div class="t" style="left:878px;top:552.24px;font-size:13.5px;font-weight:400;color:#2e3150;">Total call: 225</div>
<svg class="s" style="left:875px;top:570px;" width="12" height="70" viewBox="875 570 12 70"><circle cx="881" cy="576.60" r="3.5" fill="#5e993e"/><circle cx="881" cy="594.55" r="3.5" fill="#e3120f"/><circle cx="881" cy="612.50" r="3.5" fill="#3e8ad0"/><circle cx="881" cy="630.45" r="3.5" fill="#d07c10"/></svg>
<div class="t" style="left:890.8px;top:570.65px;font-size:13.4px;font-weight:400;color:#2e3150;">Answered: 122</div>
<div class="t" style="left:890.8px;top:588.60px;font-size:13.4px;font-weight:400;color:#2e3150;">No answer: 103</div>
<div class="t" style="left:890.8px;top:606.55px;font-size:13.4px;font-weight:400;color:#2e3150;">ASR: 54.2%</div>
<div class="t" style="left:890.8px;top:624.50px;font-size:13.4px;font-weight:400;color:#2e3150;">ALOC: 14.5s</div>
<div class="b" style="left:11px;top:704px;width:1078px;height:120px;background:#f2f2f2;border-radius:8px;"></div>
<div class="b" style="left:11px;top:752px;width:1078px;height:1px;background:#dddddd;border-radius:0px;"></div>
<div class="b" style="left:26.8px;top:719.5px;width:130.5px;height:33px;background:#f2f2f2;border-radius:0px;box-shadow:1px 0 0 #dddddd inset,-1px 0 0 #dddddd inset;"></div>
<div class="b" style="left:26.8px;top:719.3px;width:130.5px;height:2.7px;background:#5c9a3e;border-radius:0px;"></div>
<div class="t" style="left:41.2px;top:728.44px;font-size:15px;font-weight:400;color:#5c9a3e;letter-spacing:0.224px;-webkit-text-stroke:0.48px #5c9a3e;">DESTINATION</div>
<div class="t" style="left:173.1px;top:728.33px;font-size:15.1px;font-weight:400;color:#6a6c86;">TEAM</div>
<div class="t" style="left:244.6px;top:728.33px;font-size:15.1px;font-weight:400;color:#6a6c86;">AGENT</div>
<div class="t" style="left:326.9px;top:728.33px;font-size:15.1px;font-weight:400;color:#6a6c86;">TIME</div>
<div class="t" style="left:392.0px;top:728.33px;font-size:15.1px;font-weight:400;color:#6a6c86;">CALL DETAIL</div>
<div class="t" style="left:22.7px;top:771.84px;font-size:15px;font-weight:400;color:#25284a;letter-spacing:0.721px;-webkit-text-stroke:0.48px #25284a;">Outbound call report by destination</div>
<div class="b" style="left:956.5px;top:764px;width:121px;height:31px;background:transparent;border-radius:16px;box-shadow:0 0 0 1px #5c9a3e inset;"></div>
<div class="t" style="left:968.5px;top:772.17px;font-size:14px;font-weight:400;color:#5c9a3e;-webkit-text-stroke:0.2px #5c9a3e;">Export excel</div>
<svg class="s" style="left:1050px;top:770px;" width="18" height="18" viewBox="1050 770 18 18"><path d="M1055.5 773.3 H1060.6 L1064.2 777 V784.1 Q1064.2 785.6 1062.7 785.6 H1055.5 Q1054 785.6 1054 784.1 V774.8 Q1054 773.3 1055.5 773.3 Z" fill="#5c9a3e"/><path d="M1060.6 773.3 V775.6 Q1060.6 777 1062 777 H1064.2" fill="#a9cc96"/><path d="M1059.1 778.2 V782.4 M1057.2 780.6 L1059.1 782.6 L1061 780.6" fill="none" stroke="#fff" stroke-width="1.2" stroke-linecap="round" stroke-linejoin="round"/></svg>
</body></html>
